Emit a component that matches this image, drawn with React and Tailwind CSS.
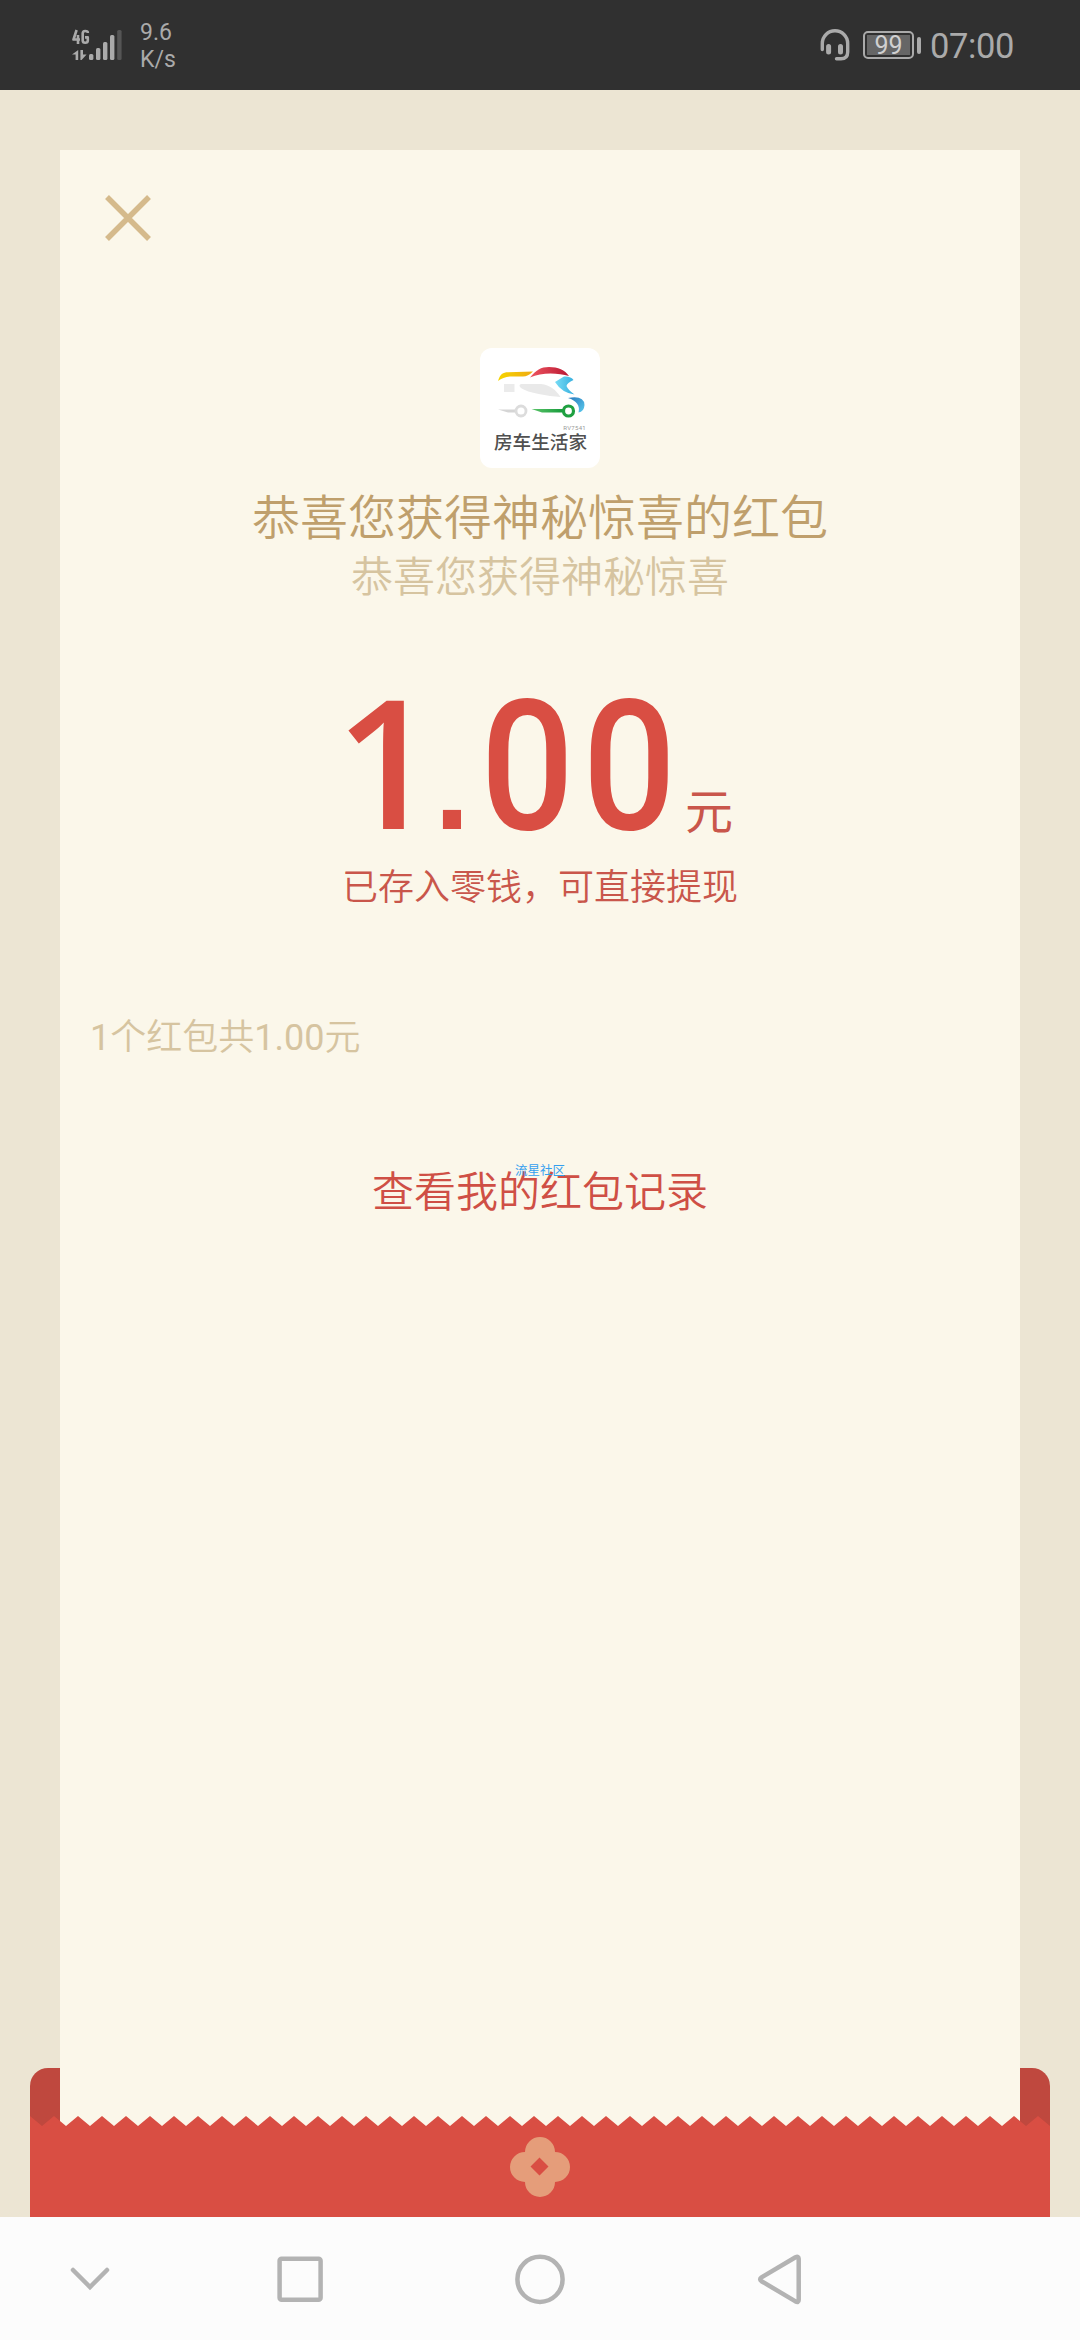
import React from 'react';

function CellSignal() {
  return (
    <svg className="h-8 w-[50px]" viewBox="0 0 50 32">
      <g fill="none" stroke="#aaa" strokeWidth="2.6" strokeLinejoin="round">
        <path d="M4.6 1 L1.5 10.5 H8 M6 6 V15" />
        <path d="M15.8 4 V3.5 Q15.8 2 13.2 2 Q10.7 2 10.7 4.5 V11.5 Q10.7 13.7 13.2 13.7 Q15.8 13.7 15.8 11.5 V8.4 H13" />
      </g>
      <path d="M6.2 21 V31 H3.6 V25.5 H0 Z M8.4 21 H11 V25.5 H14.6 L9.6 31 H8.4 Z" fill="#aaa" />
      <g fill="#aaa">
        <rect x="17" y="25" width="4.4" height="6" rx="1.5" />
        <rect x="24" y="19" width="4.4" height="12" rx="1.5" />
        <rect x="31" y="13" width="4.4" height="18" rx="1.5" />
        <rect x="38" y="6" width="4.4" height="25" rx="1.5" />
      </g>
      <rect x="45.2" y="1" width="4.4" height="30" rx="1.5" fill="#555" />
    </svg>
  );
}

function Headset() {
  return (
    <svg className="h-8 w-[30px]" viewBox="0 0 30 32" fill="none" stroke="#aaa" strokeLinecap="round">
      <path d="M2.3 20.5 V14.5 A12.7 12.7 0 0 1 27.7 14.5 V23 Q27.7 29.8 21 29.8 H16.5" strokeWidth="3.4" />
      <path d="M8.6 17.5 V23 M20.5 17.5 V23" strokeWidth="5" />
    </svg>
  );
}

function Battery() {
  return (
    <div className="flex items-center gap-[3px]">
      <div className="h-7 w-[51px] rounded-[5px] border-2 border-[#aaa] p-[2px]">
        <div className="flex h-full items-center justify-center bg-[#666] text-[25px] leading-none text-[#d0d0d0]">
          99
        </div>
      </div>
      <div className="h-[17px] w-1 rounded-sm bg-[#aaa]" />
    </div>
  );
}

function StatusBar() {
  return (
    <header className="flex h-[90px] shrink-0 items-center justify-between bg-[#303030] pl-[72px] pr-[66px] font-['Roboto',sans-serif] text-[#aaa]">
      <div className="flex items-center gap-[18px]">
        <CellSignal />
        <div className="pt-0.5 text-[23px] leading-[27px]">
          <div>9.6</div>
          <div>K/s</div>
        </div>
      </div>
      <div className="flex items-center">
        <Headset />
        <div className="ml-[13px]">
          <Battery />
        </div>
        <span className="ml-[9px] pt-[2px] text-[34.5px] leading-none tracking-[-0.4px]">07:00</span>
      </div>
    </header>
  );
}

function VanLogo() {
  return (
    <div className="relative h-[120px] w-[120px] rounded-xl bg-white">
      <svg className="h-full w-full" viewBox="0 0 120 120">
        <defs>
          <linearGradient id="roof" x1="0" x2="1">
            <stop offset="0" stopColor="#f6d500" />
            <stop offset="1" stopColor="#efaa12" />
          </linearGradient>
          <linearGradient id="top" x1="0" x2="1">
            <stop offset="0" stopColor="#ee5560" />
            <stop offset="1" stopColor="#b91732" />
          </linearGradient>
          <linearGradient id="front" x1="0" x2="1">
            <stop offset="0" stopColor="#76dcf5" />
            <stop offset="1" stopColor="#36aede" />
          </linearGradient>
          <linearGradient id="nose" x1="0" x2="1" y2="1">
            <stop offset="0" stopColor="#2878bd" />
            <stop offset="1" stopColor="#5bcbed" />
          </linearGradient>
          <linearGradient id="axle" x1="0" x2="1">
            <stop offset="0" stopColor="#5cc46a" />
            <stop offset="1" stopColor="#159a3a" />
          </linearGradient>
        </defs>
        <path d="M18 33 C20 26 23 24.3 28 24.2 L53 23.5 Q48 28.5 43 28.5 L30 28.5 Q23 29 18 33Z" fill="url(#roof)" />
        <path d="M50 29.5 C56 22 61 19 69 19 C78 19 85 22 89 28 C78 25 62 24 50 29.5Z" fill="url(#top)" />
        <rect x="24" y="36" width="10.5" height="8" fill="#ebebeb" />
        <path d="M41 36 H61 C70 37 76 42 80.5 49 C68 48 48 45 41 40 Q38 37 41 36Z" fill="#e9e9e9" />
        <path d="M75 34 L84 28.5 Q91 28 93.5 32 Q87 35 86.5 38 Q88 42 94.5 46.5 Q82 45 75 34Z" fill="url(#front)" />
        <path d="M88 50 Q104 47 104.5 57 Q104 64 98.5 64.5 Q101 54 88 50Z" fill="url(#nose)" />
        <path d="M18 61.5 L36 61.5 V64.5 H28Z" fill="#d5d5d5" />
        <circle cx="41" cy="63" r="5" fill="none" stroke="#dcdcdc" strokeWidth="2.8" />
        <path d="M51.5 61 H84 V64.5 H62Z" fill="url(#axle)" />
        <circle cx="88.5" cy="63" r="5" fill="none" stroke="#1fa041" strokeWidth="3.2" />
      </svg>
      <div className="absolute right-[14px] top-[77px] text-[6px] leading-none tracking-[0.3px] text-[#999]">RV7541</div>
      <div className="absolute left-[14px] top-[85px] whitespace-nowrap text-[18.6px] font-medium leading-[20px] text-[#505050]">
        房车生活家
      </div>
    </div>
  );
}

function Amount() {
  return (
    <div className="flex h-[150px] w-full items-baseline pl-[275px] leading-[150px] text-[#d94e43]">
      <span className="w-[93px] text-center font-['Open_Sans'] text-[180px] font-semibold">1</span>
      <span className="ml-[4px] w-[40px] text-center font-['Liberation_Sans'] text-[128px] font-bold">.</span>
      <span className="ml-[4px] w-[102px] scale-x-[0.91] text-center font-['Roboto'] text-[181px] font-medium">0</span>
      <span className="w-[102px] scale-x-[0.91] text-center font-['Roboto'] text-[181px] font-medium">0</span>
      <span className="ml-[5px] text-[48px] text-[#c9564b]">元</span>
    </div>
  );
}

function Envelope() {
  const teeth = Array.from({ length: 43 }, (_, i) => `L${i * 24} 0 L${i * 24 + 12} 10`).join(' ');
  return (
    <div className="h-full w-full">
      <svg className="h-full w-full" viewBox="0 0 1020 101">
        <path d={`M0 101 ${teeth} L1020 101 Z`} fill="#d94e43" />
        <path
          fillRule="evenodd"
          d="M495 36 a15 15 0 0 1 30 0 a15 15 0 0 1 0 30 a15 15 0 0 1 -30 0 a15 15 0 0 1 0 -30 Z M509.5 41.5 L500.5 50.5 L509.5 59.5 L518.5 50.5 Z"
          fill="#e59d7a"
        />
      </svg>
    </div>
  );
}

function NavBar() {
  return (
    <nav className="flex h-[123px] shrink-0 items-center bg-[#fcfcfc] pl-[60px]">
      <svg className="h-[60px] w-[60px]" viewBox="0 0 60 60" fill="none" stroke="#b3b3b3" strokeWidth="4.5" strokeLinecap="round">
        <path d="M13 21 L30 38 L47 21" />
      </svg>
      <svg className="ml-[150px] h-[60px] w-[60px]" viewBox="0 0 60 60" fill="none" stroke="#b3b3b3" strokeWidth="4.5">
        <rect x="9.6" y="9.8" width="41" height="41" rx="2" />
      </svg>
      <svg className="ml-[180px] h-[60px] w-[60px]" viewBox="0 0 60 60" fill="none" stroke="#b3b3b3" strokeWidth="4.5">
        <circle cx="30" cy="30.3" r="22.6" />
      </svg>
      <svg className="ml-[180px] h-[60px] w-[60px]" viewBox="0 0 60 60" fill="none" stroke="#b3b3b3" strokeWidth="4.5" strokeLinejoin="round">
        <path d="M11.5 28.4 L45.5 8.2 Q48.7 6.8 48.7 9.8 V51 Q48.7 54 45.5 52.4 L11.5 32.2 Q8.8 30.3 11.5 28.4 Z" />
      </svg>
    </nav>
  );
}

export default function App() {
  return (
    <div className="flex h-[2340px] w-[1080px] flex-col overflow-hidden bg-[#ece5d3] font-['Roboto','Noto_Sans_CJK_SC',sans-serif]">
      <StatusBar />
      <main className="grid min-h-0 flex-1 grid-cols-[30px_30px_960px_30px_30px] grid-rows-[60px_1918px_48px_101px]">
        <div className="col-start-2 row-start-3 row-span-2 rounded-tl-[18px] bg-[#bf483e]" />
        <div className="col-start-4 row-start-3 row-span-2 rounded-tr-[18px] bg-[#bf483e]" />
        <section className="col-start-3 row-start-2 row-span-3 flex flex-col items-center bg-[#fbf7ea]">
          <div className="flex h-[198px] w-full pl-[44px] pt-[44px]">
            <svg className="h-12 w-12" viewBox="0 0 48 48" stroke="#d5ba8c" strokeWidth="5.5">
              <path d="M3 3 L45 45 M45 3 L3 45" />
            </svg>
          </div>
          <VanLogo />
          <h1 className="mt-[16px] text-[48px] font-[350] leading-[70px] text-[#bf9f6c]">恭喜您获得神秘惊喜的红包</h1>
          <p className="-mt-px text-[42px] font-[350] leading-[50px] text-[#d6c4a0]">恭喜您获得神秘惊喜</p>
          <div className="mt-[82px] w-[960px]">
            <Amount />
          </div>
          <p className="mt-[28px] text-[36px] font-[350] leading-[50px] text-[#c9564b]">已存入零钱，可直接提现</p>
          <p className="mt-[100px] w-full pl-[30px] text-[36px] font-[350] leading-[50px] text-[#d6c4a0]">
            <span className="font-normal">1</span>个红包共<span className="font-normal">1.00</span>元
          </p>
          <div className="relative mt-[100px]">
            <a className="block text-[42px] font-[350] leading-[60px] text-[#cf4f45]">查看我的红包记录</a>
            <span className="absolute left-[143px] top-px whitespace-nowrap text-[12.5px] leading-[13px] text-[#35a0ef]">
              流星社区
            </span>
          </div>
        </section>
        <div className="z-10 col-start-2 col-span-3 row-start-4">
          <Envelope />
        </div>
      </main>
      <NavBar />
    </div>
  );
}
